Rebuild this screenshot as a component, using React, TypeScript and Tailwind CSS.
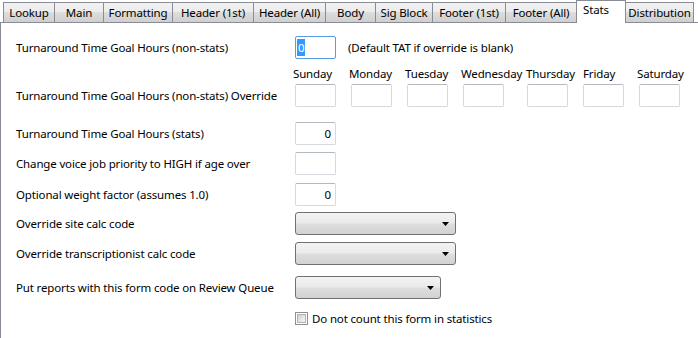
import React from "react";

const tabs = [
  { name: "Lookup", w: "w-[52px]" },
  { name: "Main", w: "w-[50px]" },
  { name: "Formatting", w: "w-[70px]" },
  { name: "Header (1st)", w: "w-[82px]" },
  { name: "Header (All)", w: "w-[73px]" },
  { name: "Body", w: "w-[51px]" },
  { name: "Sig Block", w: "w-[58px]" },
  { name: "Footer (1st)", w: "w-[74px]" },
  { name: "Footer (All)", w: "w-[72px]" },
  { name: "Stats", w: "w-[50px]", selected: true },
  { name: "Distribution", w: "w-[69px]" },
];

const days = [
  { name: "Sunday", col: "w-[56px]", lab: "-ml-[2px]" },
  { name: "Monday", col: "w-[56px]", lab: "-ml-[2px]" },
  { name: "Tuesday", col: "w-[56px]", lab: "-ml-[2px]" },
  { name: "Wednesday", col: "w-[64px]", lab: "-ml-[2px]" },
  { name: "Thursday", col: "w-[56px]", lab: "-ml-[1px]" },
  { name: "Friday", col: "w-[56px]", lab: "ml-0" },
  { name: "Saturday", col: "w-[56px]", lab: "-ml-[2px]" },
];

function Box({ value, right }: { value?: string; right?: boolean }) {
  return (
    <div
      className={`w-[41px] h-[23px] border border-[#d5d9e0] border-t-[#b4b8c0] rounded-[2px] bg-white flex items-center px-[4px] ${
        right ? "justify-end" : "justify-start"
      }`}
    >
      {value}
    </div>
  );
}

function Combo({ w }: { w: string }) {
  return (
    <div
      className={`${w} h-[23px] border border-[#707070] rounded-[3px] bg-[linear-gradient(to_bottom,#f3f3f3_0%,#ebebeb_45%,#dddddd_55%,#d2d2d2_100%)] flex items-center justify-end pr-[6px]`}
    >
      <svg width="7" height="4" viewBox="0 0 7 4">
        <path d="M0 0 H7 L3.5 4 Z" fill="#000" />
      </svg>
    </div>
  );
}

export default function App() {
  return (
    <div
      className="w-[698px] h-[338px] bg-white overflow-hidden text-[11.5px] tracking-[-0.15px] text-black flex flex-col whitespace-nowrap"
      style={{ fontFamily: '"Noto Sans", "Open Sans", sans-serif' }}
    >
      <div className="h-[22px] flex items-end pl-[3px]">
        {tabs.map((t) =>
          t.selected ? (
            <div
              key={t.name}
              className={`${t.w} -ml-px h-[23px] -mb-px relative z-10 bg-white border border-b-0 border-[#898c95] pl-[6px] pt-[1px] leading-[16px]`}
            >
              {t.name}
            </div>
          ) : (
            <div
              key={t.name}
              className={`${t.w} -ml-px first:ml-0 h-[20px] border border-b-0 border-[#898c95] bg-[linear-gradient(to_bottom,#f2f2f2_0%,#ebebeb_50%,#dddddd_50%,#cfcfcf_100%)] flex items-center justify-center leading-[16px] pt-[1px]`}
            >
              {t.name}
            </div>
          )
        )}
      </div>
      <div className="flex-1 border-l border-t border-[#898c95] pl-[15px] pt-[13px] flex flex-col">
        <div className="flex items-center h-[23px]">
          <div className="w-[279px]">Turnaround Time Goal Hours (non-stats)</div>
          <div className="w-[41px] h-[23px] border border-[#569de5] rounded-[2px] bg-white flex items-center px-[1px]">
            <span className="bg-[#3399ff] text-white h-[17px] leading-[17px] px-[1px]">0</span>
          </div>
          <div className="ml-[12px]">(Default TAT if override is blank)</div>
        </div>

        <div className="flex mt-[7px]">
          <div className="w-[279px] flex items-end">
            <div className="h-[23px] flex items-center">
              Turnaround Time Goal Hours (non-stats) Override
            </div>
          </div>
          <div className="flex">
            {days.map((d) => (
              <div key={d.name} className={`${d.col} flex flex-col`}>
                <div className={`${d.lab} h-[16px] leading-[16px] mb-[2px]`}>
                  {d.name}
                </div>
                <Box />
              </div>
            ))}
          </div>
        </div>

        <div className="flex items-center h-[23px] mt-[15px]">
          <div className="w-[279px]">Turnaround Time Goal Hours (stats)</div>
          <Box value="0" right />
        </div>
        <div className="flex items-center h-[23px] mt-[7px]">
          <div className="w-[279px]">Change voice job priority to HIGH if age over</div>
          <Box />
        </div>
        <div className="flex items-center h-[23px] mt-[8px]">
          <div className="w-[279px]">Optional weight factor (assumes 1.0)</div>
          <Box value="0" right />
        </div>

        <div className="flex items-center h-[23px] mt-[6px]">
          <div className="w-[279px]">Override site calc code</div>
          <Combo w="w-[161px]" />
        </div>
        <div className="flex items-center h-[23px] mt-[7px]">
          <div className="w-[279px]">Override transcriptionist calc code</div>
          <Combo w="w-[161px]" />
        </div>
        <div className="flex items-center h-[23px] mt-[11px]">
          <div className="w-[279px]">Put reports with this form code on Review Queue</div>
          <Combo w="w-[146px]" />
        </div>

        <div className="flex items-center h-[15px] mt-[12px] pl-[279px]">
          <div className="w-[13px] h-[13px] border border-[#8e8f8f] bg-white p-px">
            <div className="w-full h-full bg-[linear-gradient(135deg,#cbcfd5_0%,#e6e8eb_60%,#f6f6f6_100%)] border border-[#b0b4ba]" />
          </div>
          <div className="ml-[4px]">Do not count this form in statistics</div>
        </div>
      </div>
    </div>
  );
}
